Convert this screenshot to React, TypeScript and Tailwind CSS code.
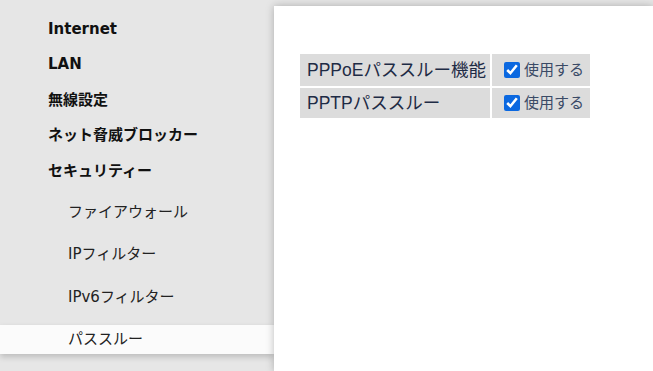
import React, { useState } from 'react';

const mainItems = ['Internet', 'LAN', '無線設定', 'ネット脅威ブロッカー', 'セキュリティー'];
const subItems = ['ファイアウォール', 'IPフィルター', 'IPv6フィルター', 'パススルー'];

const rows = [
  { label: 'PPPoEパススルー機能', checked: true },
  { label: 'PPTPパススルー', checked: true },
];

export default function App() {
  const [active] = useState('パススルー');
  const [values, setValues] = useState(rows.map(r => r.checked));

  return (
    <div
      className="flex h-[371px] w-[653px] overflow-hidden bg-[#e6e6e6]"
      style={{ fontFamily: '"DejaVu Sans", "Noto Sans CJK JP", sans-serif' }}
    >
      {/* Sidebar */}
      <nav className="w-[274px] shrink-0 pt-[11px]">
        {mainItems.map(item => (
          <div
            key={item}
            className="flex h-[35.5px] items-center pl-[48px] text-[15px] font-bold text-[#111]"
          >
            {item}
          </div>
        ))}
        <div className="mt-[9px] flex flex-col gap-[13.5px]">
          {subItems.map(item => (
            <div
              key={item}
              className={`flex h-[29px] items-center pl-[68px] text-[15px] text-[#222] ${
                item === active ? 'bg-[#fbfbfb] shadow-[0_3px_6px_rgba(0,0,0,0.18)]' : ''
              }`}
            >
              {item}
            </div>
          ))}
        </div>
      </nav>

      {/* Content */}
      <main
        className="mt-[6px] flex-1 bg-white pl-[26px] pt-[48px] shadow-[0_0_8px_rgba(0,0,0,0.25)]"
        style={{ fontFamily: '"Liberation Sans", "Noto Sans CJK JP", sans-serif' }}
      >
        <table className="border-separate border-spacing-0">
          <tbody>
            {rows.map((row, i) => (
              <tr key={row.label}>
                <td
                  className={`h-[32px] w-[192px] bg-[#dcdcdc] pl-[7px] text-[17.5px] text-[#1e2b45] ${
                    i > 0 ? 'border-t-2 border-white' : ''
                  } border-r-2 border-r-white`}
                >
                  {row.label}
                </td>
                <td
                  className={`h-[32px] w-[98px] bg-[#dcdcdc] pl-[12px] text-[15px] text-[#3a4a66] ${
                    i > 0 ? 'border-t-2 border-white' : ''
                  }`}
                >
                  <label className="flex items-center gap-[4px]">
                    <input
                      type="checkbox"
                      checked={values[i]}
                      onChange={() =>
                        setValues(prev => prev.map((v, j) => (j === i ? !v : v)))
                      }
                      className="h-[16px] w-[16px] accent-[#0b68e0]"
                    />
                    <span>使用する</span>
                  </label>
                </td>
              </tr>
            ))}
          </tbody>
        </table>
      </main>
    </div>
  );
}
